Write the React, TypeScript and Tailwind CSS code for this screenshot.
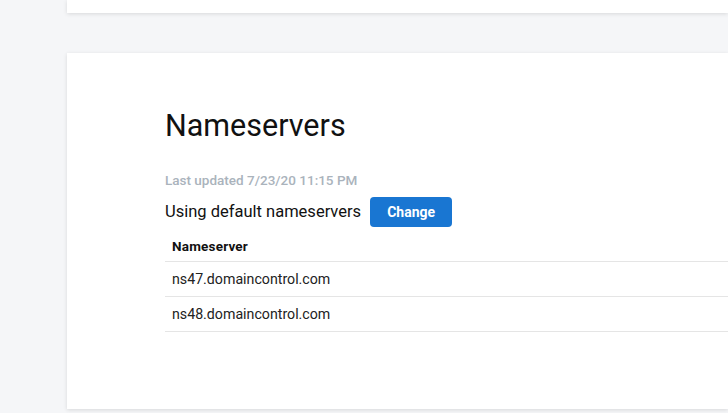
export default function App() {
	const rows = ["ns47.domaincontrol.com", "ns48.domaincontrol.com"];

	return (
		<div
			className="h-[413px] w-[728px] overflow-hidden bg-[#f5f6f8] pl-[67px]"
			style={{ fontFamily: "Roboto, 'Liberation Sans', sans-serif" }}
		>
			<div className="h-[13px] bg-white shadow-[0_1px_4px_rgba(0,0,0,0.12)]" />

			<div className="mt-[40px] h-[356px] bg-white pl-[98px] pt-[55px] shadow-[0_1px_4px_rgba(0,0,0,0.12)]">
				<h2 className="text-[30.5px] leading-[36px] font-normal text-[#111]">Nameservers</h2>

				<p className="mt-[27px] text-[13.5px] leading-[18px] font-medium text-[#aab3bc]">
					Last updated 7/23/20 11:15 PM
				</p>

				<div className="mt-[8px] flex items-center gap-[9px]">
					<span className="text-[16.5px] text-[#111]">Using default nameservers</span>
					<button className="h-[30px] w-[82px] rounded-[4px] bg-[#1976d2] text-[14px] font-bold text-white">
						Change
					</button>
				</div>

				<div className="mt-[4px]">
					<div className="flex h-[31px] items-center border-b border-[#e5e5e5] px-[7px] text-[13.5px] font-bold tracking-[0.2px] text-[#111]">
						Nameserver
					</div>
					{rows.map((r) => (
						<div
							key={r}
							className="flex h-[35px] items-center border-b border-[#e5e5e5] px-[7px] pt-[2px] text-[14.2px] text-[#222]"
						>
							{r}
						</div>
					))}
				</div>
			</div>
		</div>
	);
}
